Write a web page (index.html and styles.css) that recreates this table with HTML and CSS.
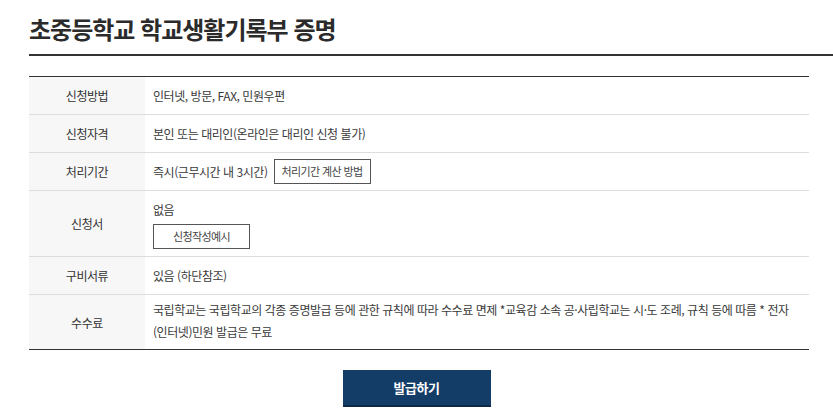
FILE: index.html
```html
<!DOCTYPE html>
<html lang="ko">
<head>
<meta charset="utf-8">
<title>초중등학교 학교생활기록부 증명</title>
<link rel="stylesheet" href="styles.css">
</head>
<body>
<div class="page">
  <h1 class="title">초중등학교 학교생활기록부 증명</h1>
  <div class="info">
    <div class="row first">
      <div class="label">신청방법</div>
      <div class="value">인터넷, 방문, FAX, 민원우편</div>
    </div>
    <div class="row">
      <div class="label">신청자격</div>
      <div class="value">본인 또는 대리인(온라인은 대리인 신청 불가)</div>
    </div>
    <div class="row">
      <div class="label">처리기간</div>
      <div class="value"><span>즉시(근무시간 내 3시간)</span><button class="sub-btn inline-btn" type="button">처리기간 계산 방법</button></div>
    </div>
    <div class="row">
      <div class="label">신청서</div>
      <div class="value stack"><div class="line">없음</div><button class="sub-btn" type="button">신청작성예시</button></div>
    </div>
    <div class="row">
      <div class="label">구비서류</div>
      <div class="value">있음 (하단참조)</div>
    </div>
    <div class="row">
      <div class="label">수수료</div>
      <div class="value multi">국립학교는 국립학교의 각종 증명발급 등에 관한 규칙에 따라 수수료 면제 *교육감 소속 공·사립학교는 시·도 조례, 규칙 등에 따름 * 전자(인터넷)민원 발급은 무료</div>
    </div>
  </div>
  <div class="actions">
    <button class="issue-btn" type="button">발급하기</button>
  </div>
</div>
</body>
</html>
```

FILE: styles.css
```css
* { box-sizing: border-box; }
html, body { margin: 0; padding: 0; background: #fff; }
body {
  font-family: "Noto Sans CJK KR", "Noto Sans", sans-serif;
  color: #3a3a3a;
}
.page {
  padding: 13px 0 0 29px;
}
.title {
  margin: 0;
  font-size: 24px;
  line-height: 31px;
  font-weight: 700;
  letter-spacing: -1px;
  color: #2b2b2b;
  padding-bottom: 10px;
  border-bottom: 2px solid #333;
}
.info {
  margin-top: 20px;
  width: 780px;
  border-top: 1px solid #333;
  border-bottom: 1px solid #333;
  font-size: 12px;
  letter-spacing: -0.45px;
}
.row {
  display: flex;
  min-height: 38px;
}
.row.first { min-height: 37px; }
.row + .row { border-top: 1px solid #ddd; }
.label {
  flex: 0 0 116px;
  background: #f7f7f7;
  color: #333;
  display: flex;
  align-items: center;
  justify-content: center;
}
.value {
  flex: 1;
  display: flex;
  align-items: center;
  padding: 0 8px;
  line-height: 26px;
}
.value.stack {
  flex-direction: column;
  align-items: flex-start;
  justify-content: center;
  padding: 6px 8px 7px;
}
.value.multi {
  display: block;
  padding: 4px 8px 6px;
  line-height: 22px;
}
.sub-btn {
  display: inline-block;
  width: 97px;
  height: 25px;
  padding: 0;
  border: 1px solid #555;
  background: #fff;
  font-family: inherit;
  font-size: 11px;
  letter-spacing: -0.6px;
  color: #444;
  line-height: 23px;
  cursor: pointer;
}
.inline-btn { margin-left: 6px; }
.stack .line { line-height: 26px; margin-bottom: 1px; }
.actions {
  display: flex;
  justify-content: center;
  margin-left: -29px;
  margin-top: 20px;
}
.issue-btn {
  width: 148px;
  height: 37px;
  background: #133c66;
  border: 0;
  border-bottom: 2px solid #0b2a4a;
  color: #fff;
  font-family: inherit;
  font-size: 13px;
  font-weight: 700;
  letter-spacing: -0.5px;
  cursor: pointer;
}
```
